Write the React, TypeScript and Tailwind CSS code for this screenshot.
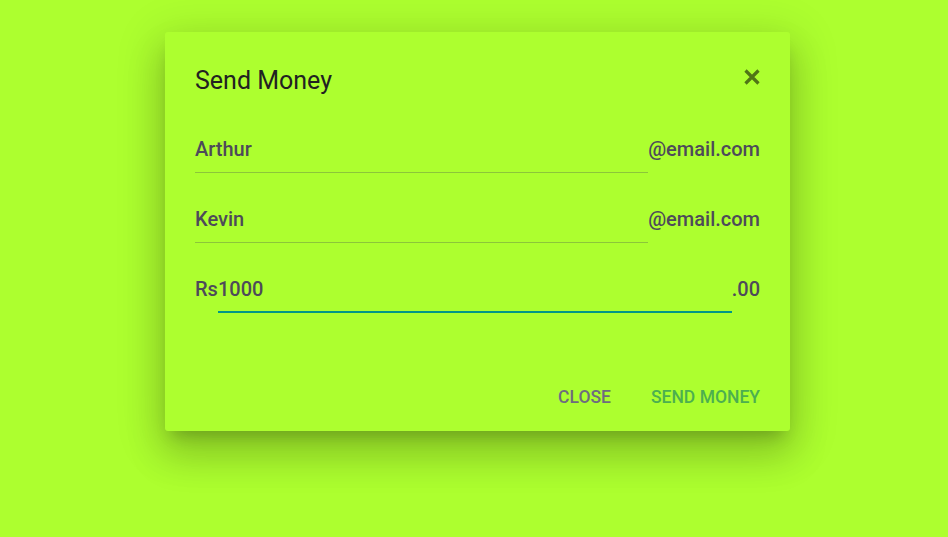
import React from "react";

export default function App() {
  return (
    <div className="min-h-screen w-full bg-[#adff2f] font-[Roboto,sans-serif] pt-[32px] overflow-hidden">
      <div className="ml-[165px] w-[625px] bg-[#adff2f] rounded-[3px] shadow-[0px_11px_15px_-7px_rgba(0,0,0,0.2),0px_24px_38px_3px_rgba(0,0,0,0.14),0px_9px_46px_8px_rgba(0,0,0,0.12)] pl-[30px] pr-[30px] pt-[29px] pb-[22px]">
        <div className="flex items-center justify-between h-[40px]">
          <h2 className="text-[25px] leading-[40px] font-normal text-[#222222]">Send Money</h2>
          <button className="w-[16px] h-[16px] mb-[8px] flex items-center justify-center text-[#507516]" aria-label="close">
            <svg width="16" height="16" viewBox="0 0 16 16">
              <path d="M1.5 1.5 L14.5 14.5 M14.5 1.5 L1.5 14.5" stroke="currentColor" strokeWidth="3.2" strokeLinecap="butt" />
            </svg>
          </button>
        </div>

        <div className="mt-[36px] flex items-start text-[20px] leading-[24px] font-medium text-[#4d4a5a]">
          <div className="flex-1 border-b border-[#8cc63a] pb-[11px]">Arthur</div>
          <div>@email.com</div>
        </div>

        <div className="mt-[34px] flex items-start text-[20px] leading-[24px] font-medium text-[#4d4a5a]">
          <div className="flex-1 border-b border-[#8cc63a] pb-[11px]">Kevin</div>
          <div>@email.com</div>
        </div>

        <div className="mt-[34px] flex items-start text-[20px] leading-[24px] font-medium text-[#4d4a5a]">
          <div>Rs</div>
          <div className="flex-1 border-b-2 border-[#009688] pb-[10px]">1000</div>
          <div>.00</div>
        </div>

        <div className="mt-[72px] flex justify-end items-center gap-[40px] text-[17.5px] leading-[24px] font-medium uppercase">
          <button className="text-[#6e6c7e] uppercase">Close</button>
          <button className="text-[#4caf50] uppercase">Send Money</button>
        </div>
      </div>
    </div>
  );
}
